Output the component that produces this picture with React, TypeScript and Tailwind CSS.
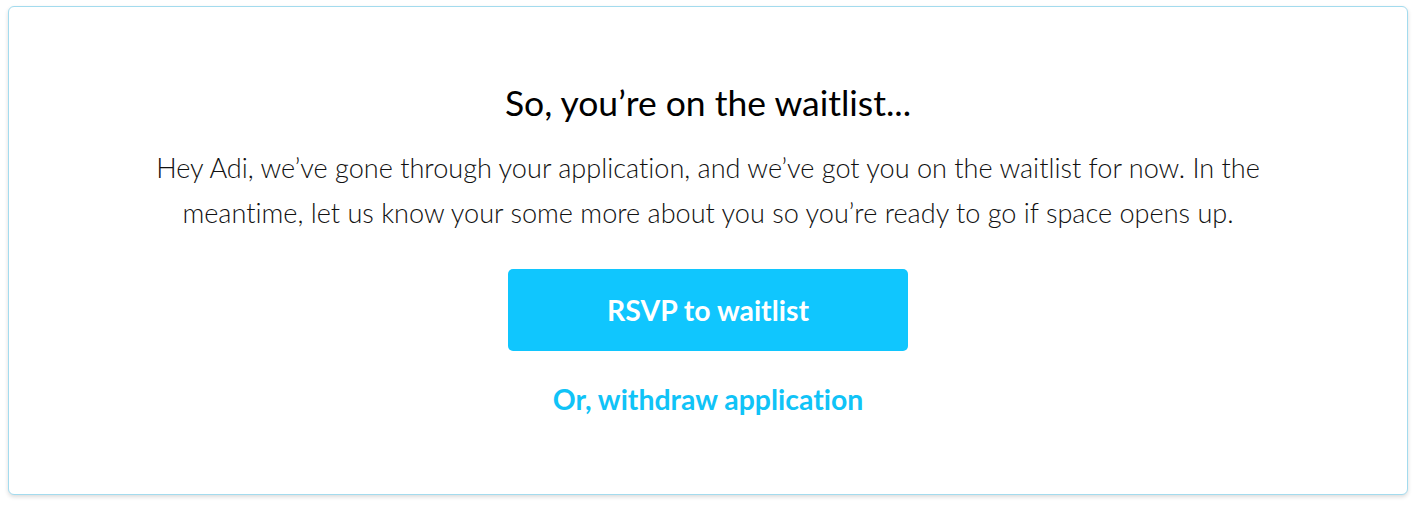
export default function App() {
  return (
    <div className="min-h-screen bg-white pt-[6px] pl-[8px] pr-[8px] font-['Lato',sans-serif] [font-variant-ligatures:none]">
      <div className="h-[489px] w-[1400px] rounded-[6px] border border-[#a3dbee] bg-white shadow-[0_2px_4px_rgba(0,0,0,0.14)] flex flex-col items-center pt-[76px]">
        <h1 className="text-[35.5px] leading-[40px] font-normal text-black">
          So, you’re on the waitlist...
        </h1>
        <p className="mt-[22px] w-[1160px] text-center text-[27.1px] leading-[45px] font-light text-[#111]">
          Hey Adi, we’ve gone through your application, and we’ve got you on the waitlist for now. In the meantime, let us know your some more about you so you’re ready to go if space opens up.
        </p>
        <button className="mt-[34px] h-[82px] w-[400px] rounded-[5px] bg-[#10c6fe] text-[28.4px] font-bold text-white">
          RSVP to waitlist
        </button>
        <a href="#" className="mt-[30px] text-[28.4px] leading-[36px] font-bold text-[#10c3f7]">
          Or, withdraw application
        </a>
      </div>
    </div>
  );
}
